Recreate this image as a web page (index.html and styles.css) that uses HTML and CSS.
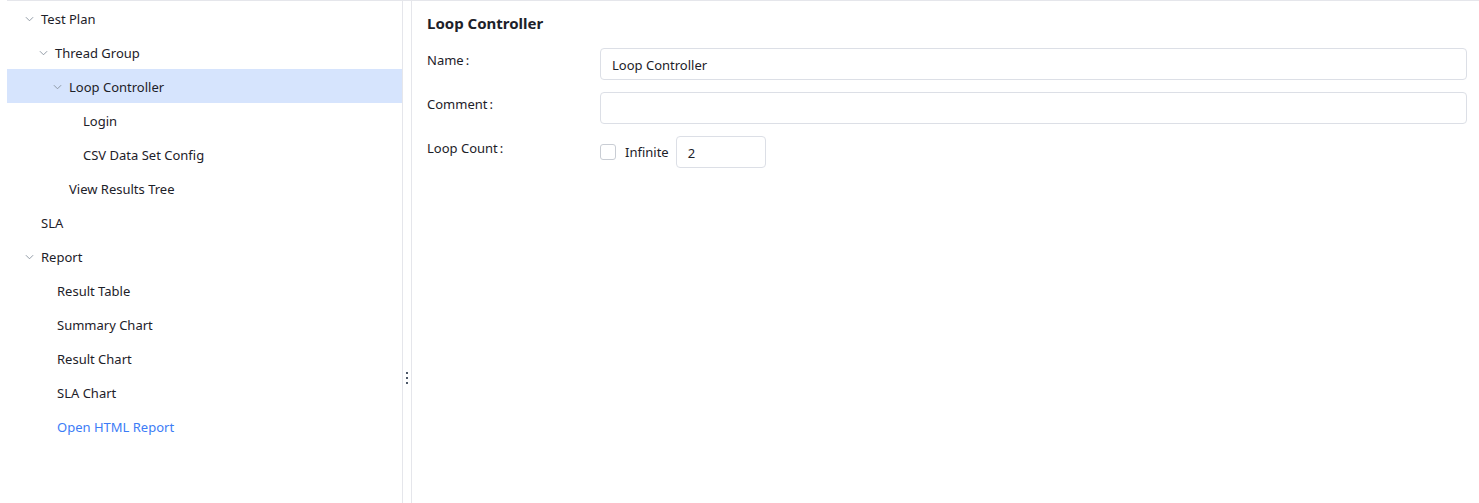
FILE: index.html
```html
<!DOCTYPE html>
<html>
<head>
<meta charset="utf-8">
<link rel="stylesheet" href="styles.css">
</head>
<body>
<div class="app">
  <aside class="sidebar">
    <ul class="tree">
      <li class="node lvl0"><span class="chev"><svg viewBox="0 0 10 6" width="9" height="6"><path d="M1 1 L5 5 L9 1" fill="none" stroke="#86909c" stroke-width="1"/></svg></span><span class="label">Test Plan</span></li>
      <li class="node lvl1"><span class="chev"><svg viewBox="0 0 10 6" width="9" height="6"><path d="M1 1 L5 5 L9 1" fill="none" stroke="#86909c" stroke-width="1"/></svg></span><span class="label">Thread Group</span></li>
      <li class="node lvl2 selected"><span class="chev"><svg viewBox="0 0 10 6" width="9" height="6"><path d="M1 1 L5 5 L9 1" fill="none" stroke="#86909c" stroke-width="1"/></svg></span><span class="label">Loop Controller</span></li>
      <li class="node leaf lvl3"><span class="label">Login</span></li>
      <li class="node leaf lvl3"><span class="label">CSV Data Set Config</span></li>
      <li class="node leaf lvl2"><span class="label">View Results Tree</span></li>
      <li class="node leaf lvl0"><span class="label">SLA</span></li>
      <li class="node lvl0"><span class="chev"><svg viewBox="0 0 10 6" width="9" height="6"><path d="M1 1 L5 5 L9 1" fill="none" stroke="#86909c" stroke-width="1"/></svg></span><span class="label">Report</span></li>
      <li class="node leaf lvl1r"><span class="label">Result Table</span></li>
      <li class="node leaf lvl1r"><span class="label">Summary Chart</span></li>
      <li class="node leaf lvl1r"><span class="label">Result Chart</span></li>
      <li class="node leaf lvl1r"><span class="label">SLA Chart</span></li>
      <li class="node leaf lvl1r link"><span class="label">Open HTML Report</span></li>
    </ul>
  </aside>
  <div class="splitter"><span class="dots"><i></i><i></i><i></i></span></div>
  <main class="panel">
    <h1 class="title">Loop Controller</h1>
    <div class="form">
      <div class="row">
        <label class="flabel">Name<span class="colon">:</span></label>
        <div class="field"><div class="input">Loop Controller</div></div>
      </div>
      <div class="row">
        <label class="flabel">Comment<span class="colon">:</span></label>
        <div class="field"><div class="input"></div></div>
      </div>
      <div class="row">
        <label class="flabel">Loop Count<span class="colon">:</span></label>
        <div class="field inline">
          <span class="checkbox"></span>
          <span class="cblabel">Infinite</span>
          <div class="input small">2</div>
        </div>
      </div>
    </div>
  </main>
</div>
</body>
</html>
```
FILE: styles.css
```css
html, body {
  margin: 0;
  padding: 0;
  background: #fff;
}
body {
  font-family: "Noto Sans", "Open Sans", sans-serif;
  font-size: 13px;
  color: #1d2129;
}
.app {
  display: flex;
  height: 502px;
  margin-left: 7px;
  border-top: 1px solid #e5e6eb;
}
.sidebar {
  width: 395px;
  border-right: 1px solid #e5e6eb;
  flex: none;
}
.tree {
  list-style: none;
  margin: 0;
  padding: 0;
}
.node {
  box-sizing: border-box;
  display: flex;
  align-items: center;
  height: 34px;
  padding-top: 1px;
  white-space: nowrap;
}
.node.selected {
  background: #d6e4fd;
}
.chev {
  width: 16px;
  display: flex;
  align-items: center;
  justify-content: flex-start;
}
.chev svg { display: block; }
.lvl0 { padding-left: 18px; }
.lvl1 { padding-left: 32px; }
.lvl2 { padding-left: 46px; }
.leaf.lvl0 { padding-left: 34px; }
.leaf.lvl2 { padding-left: 62px; }
.leaf.lvl3 { padding-left: 76px; }
.leaf.lvl1r { padding-left: 50px; }
.link .label { color: #3c7cf6; }
.splitter {
  width: 9px;
  flex: none;
  border-right: 1px solid #e5e6eb;
  display: flex;
  align-items: flex-start;
  justify-content: flex-start;
  padding-left: 3px;
  box-sizing: border-box;
}
.dots {
  display: flex;
  flex-direction: column;
  gap: 3px;
  margin-top: 371px;
}
.dots i {
  display: block;
  width: 2px;
  height: 2px;
  background: #4e5969;
}
.panel {
  flex: 1;
  padding: 11px 12px 0 15px;
  min-width: 0;
}
.title {
  margin: 0;
  font-size: 15px;
  font-weight: 700;
  line-height: 22px;
  color: #1d2129;
}
.form {
  margin-top: 14px;
  display: flex;
  flex-direction: column;
  gap: 12px;
}
.row {
  display: flex;
  align-items: flex-start;
}
.flabel {
  width: 173px;
  flex: none;
  line-height: 24px;
  color: #1d2129;
}
.colon {
  margin-left: 2px;
}
.field {
  flex: 1;
  min-width: 0;
}
.field.inline {
  display: flex;
  align-items: center;
}
.input {
  box-sizing: border-box;
  height: 32px;
  border: 1px solid #dcdfe6;
  border-radius: 4px;
  padding: 1px 11px 0;
  line-height: 30px;
  color: #1d2129;
}
.input.small {
  width: 90px;
}
.checkbox {
  box-sizing: border-box;
  width: 16px;
  height: 16px;
  border: 1px solid #c9cdd4;
  border-radius: 3px;
  margin-right: 9px;
}
.cblabel {
  margin-right: 7px;
  color: #1d2129;
}
```
